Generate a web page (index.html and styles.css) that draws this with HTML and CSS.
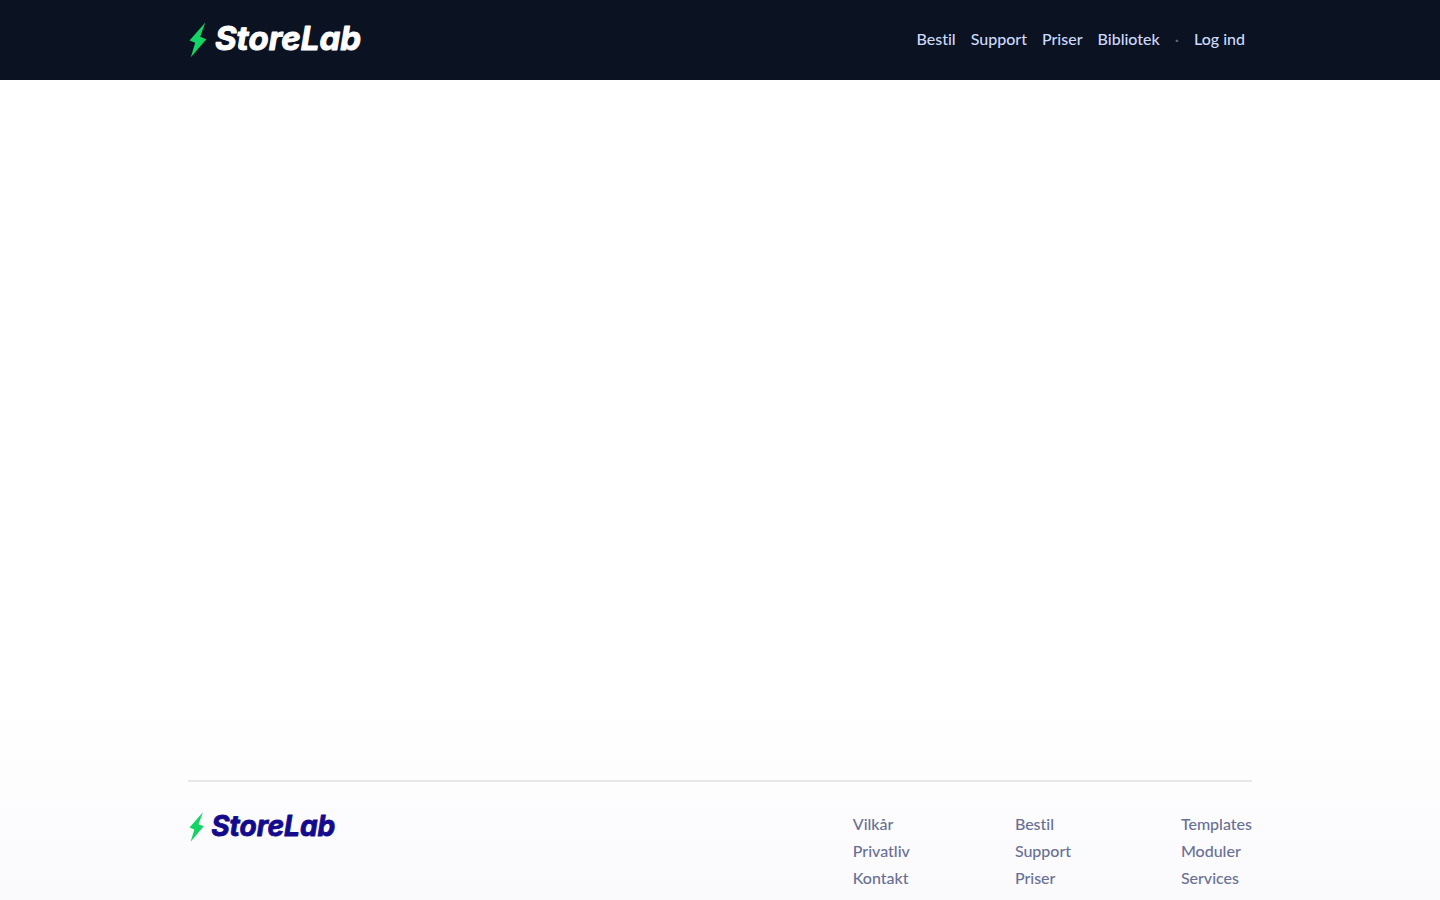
FILE: index.html
```html
<!DOCTYPE html>
<html lang="da">
<head>
<meta charset="UTF-8" />
<meta name="viewport" content="width=device-width, initial-scale=1" />
<title>StoreLab</title>
<link rel="stylesheet" href="styles.css">
</head>
<body>

<header class="header">
  <div class="container header-inner">
    <a href="#" class="logo" aria-label="StoreLab">
      <svg width="176" height="40" viewBox="0 0 176 40">
        <path class="bolt" d="M17.300 2.500L1.500 20.500L7.200 22.800L2.800 37.300L18.300 19.200L12.200 16.700Z" />
        <text class="logo-text" x="27" y="30">StoreLab</text>
      </svg>
    </a>
    <nav class="nav">
      <a href="#">Bestil</a>
      <a href="#">Support</a>
      <a href="#">Priser</a>
      <a href="#">Bibliotek</a>
      <span class="dot">·</span>
      <a href="#">Log ind</a>
    </nav>
  </div>
</header>

<main class="main"></main>

<footer class="footer">
  <div class="container">
    <div class="footer-inner">
      <a href="#" class="logo logo-dark" aria-label="StoreLab">
        <svg width="150" height="34" viewBox="0 0 176 40">
          <path class="bolt" d="M17.300 2.500L1.500 20.500L7.200 22.800L2.800 37.300L18.300 19.200L12.200 16.700Z" />
          <text class="logo-text" x="27" y="30">StoreLab</text>
        </svg>
      </a>
      <div class="footer-links">
        <ul>
          <li><a href="#">Vilkår</a></li>
          <li><a href="#">Privatliv</a></li>
          <li><a href="#">Kontakt</a></li>
        </ul>
        <ul>
          <li><a href="#">Bestil</a></li>
          <li><a href="#">Support</a></li>
          <li><a href="#">Priser</a></li>
        </ul>
        <ul>
          <li><a href="#">Templates</a></li>
          <li><a href="#">Moduler</a></li>
          <li><a href="#">Services</a></li>
        </ul>
      </div>
    </div>
  </div>
</footer>

</body>
</html>
```

FILE: styles.css
```css
* {
  box-sizing: border-box;
}
body {
  margin: 0;
  min-height: 100vh;
  display: flex;
  flex-direction: column;
  background-color: #fff;
  font-family: Lato, "Proxima Nova", sans-serif;
  font-size: 16px;
  font-weight: 500;
  font-variant-ligatures: none;
  line-height: 27px;
}
a {
  color: inherit;
  text-decoration: none;
}
.container {
  width: 100%;
  max-width: 1104px;
  margin: 0 auto;
  padding: 0 20px;
}
/* Header */
.header {
  background-color: #0b1221;
  color: #cddafd;
}
.header-inner {
  min-height: 80px;
  display: flex;
  align-items: center;
  justify-content: space-between;
}
.nav {
  display: flex;
  flex-wrap: wrap;
  gap: 15px;
  padding: 0 7px 3px 0;
}
.nav a:hover {
  color: #fff;
}
.dot {
  color: #5c6780;
}
/* Logo */
.logo {
  color: #fff;
}
.logo svg {
  display: block;
  overflow: visible;
}
.bolt {
  fill: #13d565;
}
.logo-text {
  font-family: Inter, sans-serif;
  font-size: 33px;
  font-weight: 700;
  font-style: italic;
  font-feature-settings: "cv11";
  fill: currentColor;
  stroke: currentColor;
  stroke-width: 1;
  stroke-linejoin: round;
}
.logo-dark {
  color: #140b8c;
}
/* Footer */
.main {
  flex: 1;
}
.footer {
  padding-top: 80px;
  background: linear-gradient(#fff, #fafafd);
  color: #697094;
}
.footer-inner {
  display: flex;
  justify-content: space-between;
  align-items: flex-start;
  padding: 28px 0 9px;
  border-top: 2px solid #e6e7e9;
}
.footer-links {
  display: grid;
  grid-template-columns: auto minmax(61px, auto) auto;
  gap: 105px;
}
.footer-links ul {
  margin: 0;
  padding: 0;
  list-style: none;
}
.footer-links a:hover {
  color: #140b8c;
}
```
